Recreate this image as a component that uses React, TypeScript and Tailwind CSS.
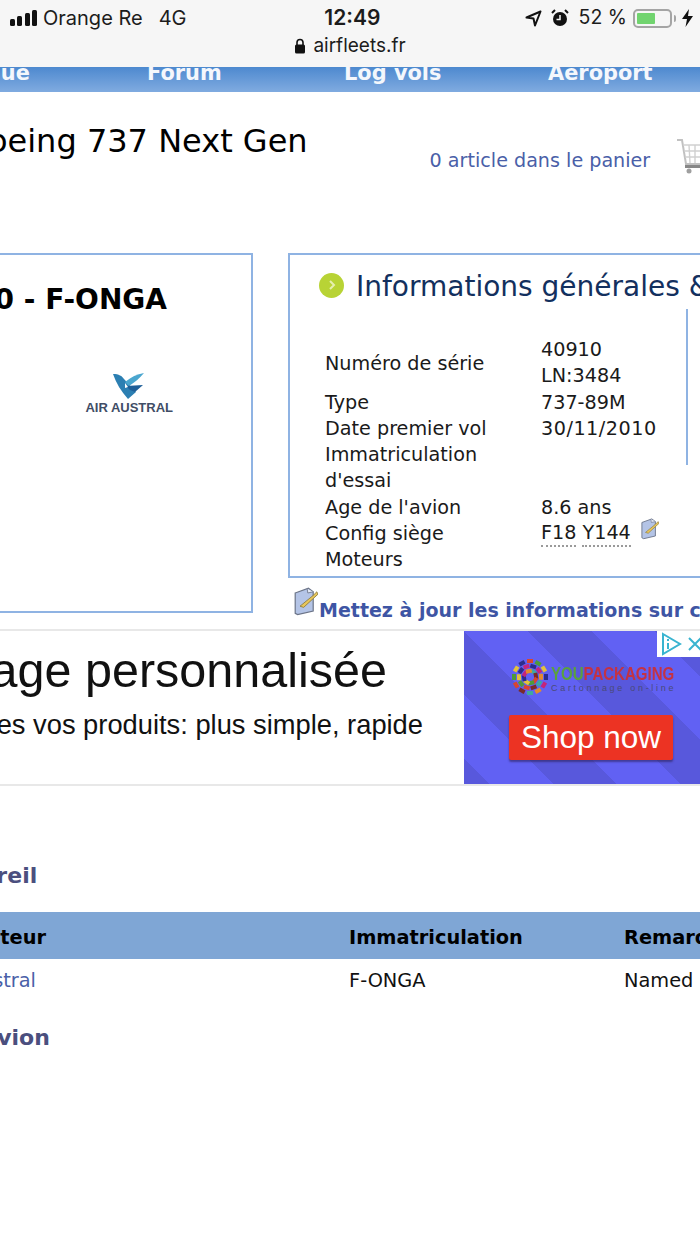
const rows = [
  { label: 'Type', value: '737-89M', valueClass: '' },
  { label: 'Date premier vol', value: '30/11/2010', valueClass: 'tracking-[0.5px]' },
  { label: "Immatriculation d'essai", value: '', valueClass: '' },
  { label: "Age de l'avion", value: '8.6 ans', valueClass: '' },
]

const confetti = ['#d8452f', '#4e9a3a', '#e3c23b', '#2c2c8c', '#c4257a', '#e58a2c', '#3fa7a0', '#7a2a2a']

function NoteIcon({ size }: { size: number }) {
  return (
    <svg width={size} height={size * 1.2} viewBox="0 0 20 24" className="shrink-0">
      <path d="M1 5 L12 1 L16 4 L16 20 L3 23 L1 22 Z" fill="#b4c4e6" stroke="#6b7488" strokeWidth="1" />
      <path d="M11 1.5 L11.5 5 L16 4" fill="#e4e9f5" stroke="#6b7488" strokeWidth="0.7" />
      <path d="M5 16 L16 7 L19 4 L20 6 L8 17 Z" fill="#e8c65a" stroke="#8a7a3c" strokeWidth="0.7" />
    </svg>
  )
}

function CartIcon() {
  return (
    <svg width="32" height="38" viewBox="0 0 32 38" className="opacity-70 blur-[0.6px]">
      <path d="M1 3 L6 3 L10 27 L32 27" fill="none" stroke="#a8a8a8" strokeWidth="2" />
      <path d="M7 8 L32 8 M8 14 L32 14 M9 20 L32 20 M13 8 L14 26 M19 8 L19 26 M25 8 L25 26" stroke="#bdbdbd" strokeWidth="1.4" fill="none" />
      <rect x="9" y="28" width="23" height="3" fill="#555" />
      <circle cx="13" cy="34" r="2.5" fill="#777" />
      <circle cx="27" cy="34" r="2.5" fill="#777" />
    </svg>
  )
}

function AirAustralMark() {
  return (
    <svg width="32" height="26" viewBox="0 0 32 26">
      <path d="M0 1 C6 1 9 3 11 6 L23 19 L15 26 C8 18 3 10 0 1 Z" fill="#2c7fb2" />
      <path d="M31 0 C24 1 18 4 12 9 L16 13 C22 9 27 5 31 0 Z" fill="#4aa6cf" />
      <path d="M13 13 L30 12 L22 19 L17 17 Z" fill="#1f5f98" />
      <path d="M12 10 L15 14 L12 15 Z" fill="#fff" />
    </svg>
  )
}

function YouPackagingMark() {
  return (
    <svg width="36" height="40" viewBox="-18 -20 36 40" className="shrink-0">
      {[16, 11, 6].map((radius, ring) =>
        Array.from({ length: 12 - ring * 2 }).map((_, i) => {
          const angle = (360 / (12 - ring * 2)) * i + ring * 17
          return (
            <rect
              key={`${ring}-${i}`}
              x={-3}
              y={-radius - 2}
              width={6}
              height={4}
              fill={confetti[(i + ring * 3) % confetti.length]}
              transform={`rotate(${angle})`}
            />
          )
        }),
      )}
    </svg>
  )
}

export default function App() {
  return (
    <div className="h-[1244px] w-[700px] overflow-hidden bg-white font-['DejaVu_Sans',sans-serif] text-black">
      <div className="h-[67px] bg-[#f6f6f6] font-['Inter',sans-serif]">
        <div className="flex h-[36px] items-center justify-between pl-[10px] pr-[7px] text-[20px] text-[#1c1c1c]">
          <div className="flex w-[200px] items-center">
            <svg width="28" height="18" viewBox="0 0 28 18" className="mr-[5px] shrink-0">
              <rect x="0" y="10" width="5" height="7" rx="1.5" fill="#111" />
              <rect x="7" y="7" width="5" height="10" rx="1.5" fill="#111" />
              <rect x="15" y="4" width="5" height="13" rx="1.5" fill="#111" />
              <rect x="22" y="1" width="5" height="16" rx="1.5" fill="#111" />
            </svg>
            <span className="whitespace-nowrap">Orange Re</span>
            <span className="ml-[16px]">4G</span>
          </div>
          <span className="ml-[-30px] text-[21px] font-semibold">12:49</span>
          <div className="flex items-center">
            <svg width="17" height="17" viewBox="0 0 17 17" className="mr-[9px]">
              <path d="M15.5 1.5 L1.5 7.5 L8.5 8.5 L10 15.5 Z" fill="none" stroke="#111" strokeWidth="2" strokeLinejoin="round" />
            </svg>
            <svg width="18" height="18" viewBox="0 0 18 18" className="mr-[10px]">
              <circle cx="9" cy="10" r="7" fill="#111" />
              <path d="M9 6 V10.5 H5.5" stroke="#f6f6f6" strokeWidth="1.5" fill="none" />
              <path d="M1 4 L4 1 M17 4 L14 1" stroke="#111" strokeWidth="2" />
            </svg>
            <span className="text-[19.5px]">52 %</span>
            <div className="ml-[6px] h-[19px] w-[39px] rounded-[5px] border-2 border-[#a5a5a5] p-[2px]">
              <div className="h-full w-[18px] rounded-[1px] bg-[#71d46f]" />
            </div>
            <div className="ml-[2px] h-[7px] w-[2px] rounded-r bg-[#a5a5a5]" />
            <svg width="11" height="18" viewBox="0 0 11 18" className="ml-[6px]">
              <path d="M7 0 L0 10 L5 10 L3.5 18 L11 7 L6 7 Z" fill="#111" />
            </svg>
          </div>
        </div>
        <div className="flex h-[20px] items-center justify-center text-[19px] text-[#1c1c1c]">
          <svg width="12" height="16" viewBox="0 0 12 16" className="mr-[7px]">
            <path d="M3 7 V4.5 a3 3 0 0 1 6 0 V7" fill="none" stroke="#111" strokeWidth="1.6" />
            <rect x="1" y="6.5" width="10" height="9" rx="1.5" fill="#111" />
          </svg>
          <span>airfleets.fr</span>
        </div>
      </div>

      <nav className="flex h-[25px] items-start overflow-hidden whitespace-nowrap bg-gradient-to-b from-[#4d89cf] to-[#80abe0] text-[20.9px] font-bold leading-[12px] text-[#f4f7fc]">
        <span className="ml-[-100px] w-[247px] shrink-0">Statistique</span>
        <span className="w-[197px] shrink-0">Forum</span>
        <span className="w-[204px] shrink-0">Log vols</span>
        <span>Aeroport</span>
      </nav>

      <header className="h-[161px]">
        <div className="flex items-start">
          <h1 className="ml-[-34px] mt-[25px] whitespace-nowrap text-[32px] font-normal leading-[48px]">Boeing 737 Next Gen</h1>
          <a className="ml-[122px] mt-[56px] whitespace-nowrap text-[19.15px] leading-[26px] text-[#4a5fa8]">0 article dans le panier</a>
          <div className="ml-[26px] mt-[45px] shrink-0">
            <CartIcon />
          </div>
        </div>
      </header>

      <div className="flex items-start">
        <section className="ml-[-20px] flex h-[360px] w-[273px] shrink-0 flex-col items-end border-2 border-[#8fb3e3] pr-[84px] pt-[27px]">
          <h2 className="whitespace-nowrap text-[28px] font-bold leading-[36px]">40910 - F-ONGA</h2>
          <div className="mr-[-6px] mt-[55px] flex flex-col items-center">
            <AirAustralMark />
            <span className="mt-[2px] whitespace-nowrap font-['Liberation_Sans',sans-serif] text-[13px] font-bold leading-[14px] text-[#3f4d66]">AIR AUSTRAL</span>
          </div>
        </section>

        <section className="relative ml-[35px] h-[325px] w-[500px] shrink-0 border-2 border-[#8fb3e3]">
          <div className="flex h-[56px] items-center whitespace-nowrap pl-[29px] pt-[4px]">
            <div className="flex h-[25px] w-[25px] shrink-0 items-center justify-center rounded-full bg-[#b8d335] blur-[0.4px]">
              <svg width="10" height="12" viewBox="0 0 10 12">
                <path d="M3 2 L7 6 L3 10" fill="none" stroke="#e6efb0" strokeWidth="2" />
              </svg>
            </div>
            <h2 className="ml-[12px] mt-[4px] text-[28px] font-normal text-[#13305e]">Informations générales &amp;</h2>
          </div>
          <div className="absolute left-[396px] top-[54px] h-[156px] w-[2px] bg-[#8fb3e3]" />
          <div className="grid grid-cols-[216px_1fr] pl-[35px] pt-[26px] text-[19.2px] leading-[26.3px] text-[#1a1a1a]">
            <div className="mt-[1px] self-center">Numéro de série</div>
            <div>
              40910
              <br />
              LN:3484
            </div>
            {rows.map((row) => (
              <div key={row.label} className="contents">
                <div className="w-[190px]">{row.label}</div>
                <div className={row.valueClass}>{row.value}</div>
              </div>
            ))}
            <div>Config siège</div>
            <div className="flex items-start">
              <span className="border-b-2 border-dotted border-[#9a9a9a] leading-[24px]">F18</span>
              <span className="ml-[6px] border-b-2 border-dotted border-[#9a9a9a] leading-[24px]">Y144</span>
              <span className="ml-[10px] mt-[-3px]">
                <NoteIcon size={18} />
              </span>
            </div>
            <div>Moteurs</div>
            <div />
          </div>
        </section>
      </div>

      <div className="mt-[-34px] flex h-[50px] items-start whitespace-nowrap pl-[294px]">
        <div className="mt-[8px]">
          <NoteIcon size={24} />
        </div>
        <a className="ml-[1px] mt-[19px] text-[19px] font-bold leading-[24px] text-[#3e55a4]">Mettez à jour les informations sur cet appareil</a>
      </div>

      <div className="flex h-[157px] items-stretch overflow-hidden border-y-2 border-[#e8e8e8] bg-white font-['Liberation_Sans',sans-serif]">
        <div className="flex w-[464px] shrink-0 flex-col items-end justify-start whitespace-nowrap pr-[41px] pt-[11px] text-[#111]">
          <div className="mr-[36px] text-[48.5px] leading-[56px]">Emballage personnalisée</div>
          <div className="mt-[11px] text-[27.3px] leading-[32px]">Emballez toutes vos produits: plus simple, rapide</div>
        </div>
        <div className="relative flex-1 bg-[repeating-linear-gradient(45deg,#5858dc_0px,#5858dc_18px,#6161f3_18px,#6161f3_63px,#5858dc_63px,#5858dc_90px)] pl-[48px] pt-[26px]">
          <div className="absolute right-0 top-0 flex h-[26px] w-[43px] items-center bg-white pl-[3px]">
            <svg width="22" height="24" viewBox="0 0 22 24" className="shrink-0">
              <path d="M3 2 L20 12 L3 22 Z" fill="none" stroke="#39b4d0" strokeWidth="2" />
              <path d="M8 11 V17 M8 7 V9" stroke="#39b4d0" strokeWidth="2" />
            </svg>
            <svg width="14" height="14" viewBox="0 0 14 14" className="ml-[6px] shrink-0">
              <path d="M1 1 L13 13 M13 1 L1 13" stroke="#39b4d0" strokeWidth="2" />
            </svg>
          </div>
          <div className="flex items-center">
            <YouPackagingMark />
            <div className="ml-[3px] w-[122px] pt-[5px]">
              <div className="origin-left scale-x-[0.79] whitespace-nowrap text-[19px] font-bold leading-[18px]">
                <span className="text-[#5aa13e]">YOU</span>
                <span className="text-[#c43243]">PACKAGING</span>
              </div>
              <div className="whitespace-nowrap text-[9px] leading-[11px] tracking-[2.7px] text-[#4a4a78]">Cartonnage on-line</div>
            </div>
          </div>
          <div className="ml-[-3px] mt-[18px] flex h-[45px] w-[164px] items-center justify-center rounded-[2px] bg-[#ec3323] text-[31.5px] text-white shadow-[0_2px_2px_rgba(40,30,80,0.55)]">Shop now</div>
        </div>
      </div>

      <h3 className="ml-[-67px] mt-[76px] whitespace-nowrap text-[22px] font-bold leading-[28px] text-[#4b4f7e]">Appareil</h3>

      <div className="mt-[22px] grid grid-cols-[349px_275px_1fr] whitespace-nowrap text-[19.35px]">
        <div className="flex h-[47px] items-center justify-end bg-[#7fa6d5] pr-[303px] pt-[4px] font-bold">Exploitateur</div>
        <div className="flex h-[47px] items-center bg-[#7fa6d5] pt-[4px] font-bold">Immatriculation</div>
        <div className="flex h-[47px] items-center bg-[#7fa6d5] pt-[4px] font-bold">Remarque</div>
        <div className="flex h-[44px] items-center justify-end pr-[313px] text-[#4a5fa8]">Air Austral</div>
        <div className="flex h-[44px] items-center text-[#111]">F-ONGA</div>
        <div className="flex h-[44px] items-center text-[#111]">Named</div>
      </div>

      <h3 className="ml-[-19px] mt-[21px] whitespace-nowrap text-[22px] font-bold leading-[28px] text-[#4b4f7e]">Avion</h3>
    </div>
  )
}
